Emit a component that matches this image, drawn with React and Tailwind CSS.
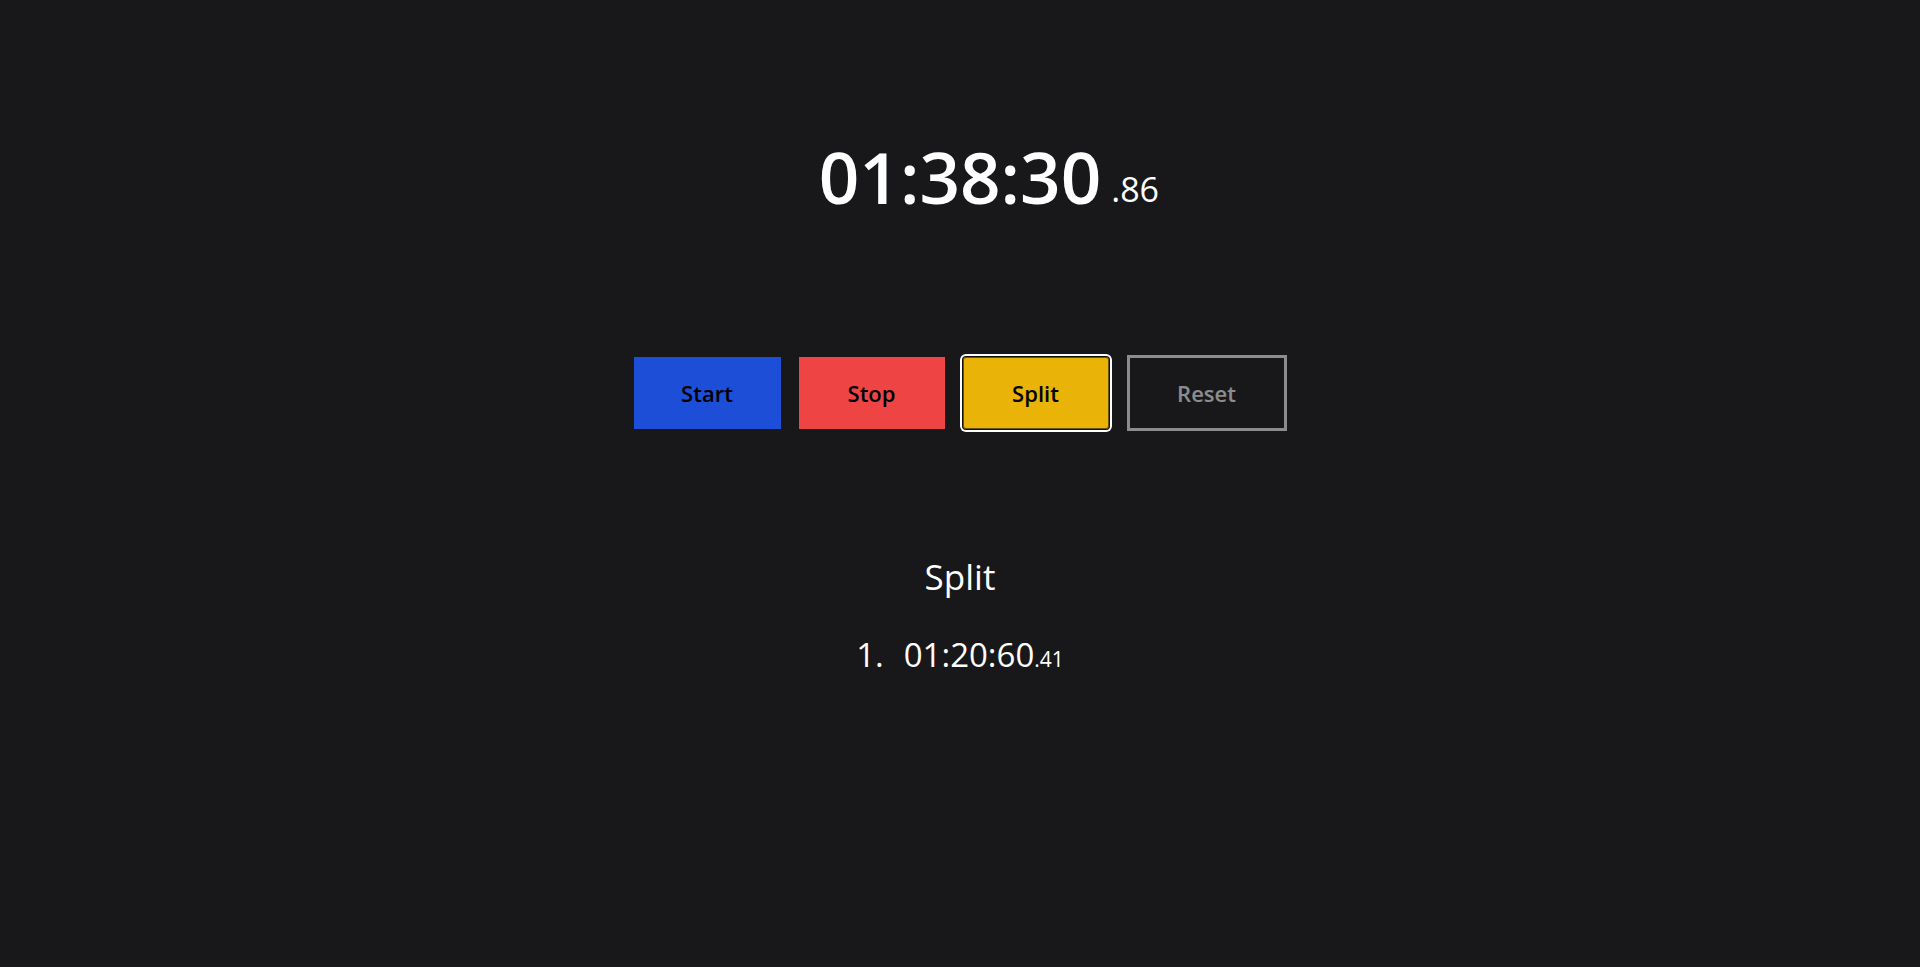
import React from "react";

const splits = [{ time: "01:20:60", ms: ".41" }];

export default function App() {
  return (
    <div
      className="min-h-[967px] w-full bg-[#18181b] text-white flex flex-col items-center pt-[141px]"
      style={{ fontFamily: '"Open Sans", "Noto Sans", sans-serif' }}
    >
      <div className="relative text-[71px] leading-none font-semibold">
        01:38:30
        <span className="absolute left-full top-[31px] ml-[10px] text-[34px] leading-none font-normal">
          .86
        </span>
      </div>

      <div className="mt-[143px] flex items-center gap-[18px] text-[22px] font-semibold text-black">
        <button className="w-[147px] h-[72px] bg-[#1d4ed8]">Start</button>
        <button className="w-[146px] h-[72px] bg-[#ef4444]">Stop</button>
        <button className="w-[146px] h-[72px] bg-[#eab308] rounded-[3px] shadow-[inset_0_0_0_1px_rgba(0,0,0,0.55),0_0_0_1px_#111,0_0_0_3px_#fff]">
          Split
        </button>
        <button className="w-[160px] h-[76px] border-[3px] border-white text-white opacity-50">
          Reset
        </button>
      </div>

      <div className="mt-[128px] text-[35px] leading-none">Split</div>

      <ol className="mt-[44px]">
        {splits.map((s, i) => (
          <li key={i} className="text-[33px] leading-none flex items-baseline">
            <span className="mr-[20px]">{i + 1}.</span>
            <span>{s.time}</span>
            <span className="text-[21px]">{s.ms}</span>
          </li>
        ))}
      </ol>
    </div>
  );
}
